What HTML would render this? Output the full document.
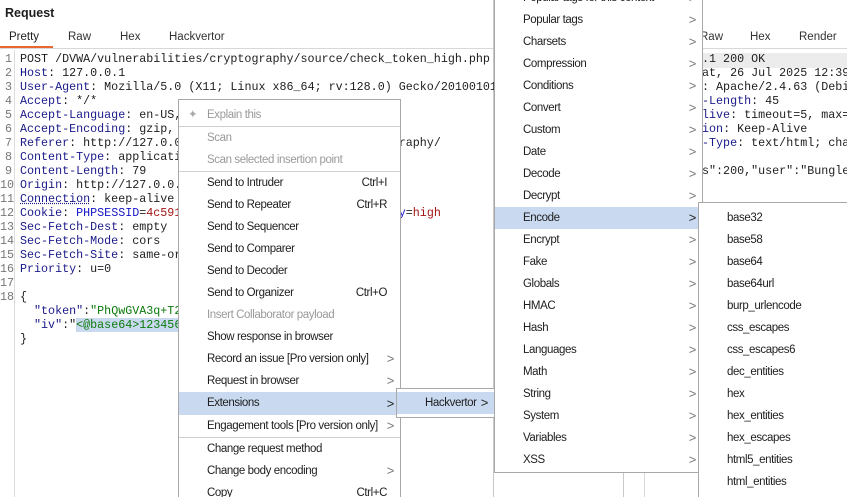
<!DOCTYPE html>
<html><head><meta charset="utf-8"><style>
*{margin:0;padding:0;box-sizing:border-box}
html,body{width:847px;height:497px;overflow:hidden}
body{background:#fff;position:relative;font-family:"Liberation Sans","DejaVu Sans",sans-serif;color:#1e1e1e}
#w{position:absolute;left:0;top:0;width:847px;height:497px;overflow:hidden}
.a{position:absolute;white-space:nowrap}
.mono{font-family:"Liberation Mono","DejaVu Sans Mono",monospace;font-size:11.7px;line-height:14px}
.k{color:#1a1a8a}.r{color:#a31515}.g{color:#0b7a0b}
.menu{position:absolute;background:#fff;border:1px solid #a8a8a8;font-size:11.5px;letter-spacing:-0.4px}
.it{position:absolute;left:0;right:0;height:22px;line-height:22px;padding-left:28px}
.it .sc{position:absolute;right:13px;top:0}
.it .ar{position:absolute;right:6px;top:0;color:#777;font-size:13px}
.dis{color:#9a9a9a}
.sel{background:#c9d9ef}
.sep{position:absolute;left:0;right:0;height:1px;background:#d0d0d0}
.ln{color:#777}
</style></head><body><div id="w">
<div class="a" style="left:5px;top:6px;font-weight:bold;font-size:12.5px">Request</div>
<div class="a" style="left:9px;top:31px;font-size:11.5px">Pretty</div>
<div class="a" style="left:68px;top:31px;font-size:11.5px;color:#333">Raw</div>
<div class="a" style="left:120px;top:31px;font-size:11.5px;color:#333">Hex</div>
<div class="a" style="left:169px;top:31px;font-size:11.5px;color:#333">Hackvertor</div>
<div class="a" style="left:0;top:46px;width:53px;height:2px;background:#e8662f"></div>
<div class="a" style="left:0;top:48px;width:493px;height:1px;background:#d8d8d8"></div>
<div class="a" style="left:493px;top:0;width:1px;height:497px;background:#c8c8c8"></div>
<div class="a" style="left:14px;top:50px;width:1px;height:447px;background:#ddd"></div>
<div class="a mono ln" style="left:0;top:52px;width:12px;text-align:right">1<br>2<br>3<br>4<br>5<br>6<br>7<br>8<br>9<br>10<br>11<br>12<br>13<br>14<br>15<br>16<br>17<br>18</div>
<div class="a mono" style="left:20px;top:52px">POST /DVWA/vulnerabilities/cryptography/source/check_token_high.php<br>
<span class="k">Host</span>: 127.0.0.1<br>
<span class="k">User-Agent</span>: Mozilla/5.0 (X11; Linux x86_64; rv:128.0) Gecko/20100101<br>
<span class="k">Accept</span>: */*<br>
<span class="k">Accept-Language</span>: en-US,<br>
<span class="k">Accept-Encoding</span>: gzip,<br>
<span class="k">Referer</span>: http://127.0.0.1/DVWA/vulnerabilities/cryptography/<br>
<span class="k">Content-Type</span>: application/json<br>
<span class="k">Content-Length</span>: 79<br>
<span class="k">Origin</span>: http://127.0.0.1<br>
<span class="k" style="text-decoration:underline dotted">Connection</span>: keep-alive<br>
<span class="k">Cookie</span>: <span style="color:#1515c8">PHPSESSID</span>=<span class="r">4c591</span>xxxxxxxxxxxxxxxxxxxxxx; <span style="color:#1515c8">security</span>=<span class="r">high</span><br>
<span class="k">Sec-Fetch-Dest</span>: empty<br>
<span class="k">Sec-Fetch-Mode</span>: cors<br>
<span class="k">Sec-Fetch-Site</span>: same-origin<br>
<span class="k">Priority</span>: u=0<br><br>
{<br>
&nbsp;&nbsp;<span class="k">"token"</span>:<span class="g">"PhQwGVA3q+T2</span><br>
&nbsp;&nbsp;<span class="k">"iv"</span>:"<span class="g" style="background:#c9d9ef">&lt;@base64&gt;123456</span><br>
}</div>
<div class="a" style="left:494px;top:205px;width:4px;height:20px;background:#c9d9ef"></div>
<div class="a" style="left:700px;top:31px;font-size:11.5px;color:#333">Raw</div>
<div class="a" style="left:750px;top:31px;font-size:11.5px;color:#333">Hex</div>
<div class="a" style="left:799px;top:31px;font-size:11.5px;color:#333">Render</div>
<div class="a" style="left:623px;top:48px;width:224px;height:1px;background:#d8d8d8"></div>
<div class="a" style="left:623px;top:53px;width:224px;height:15px;background:#ececec"></div>
<div class="a mono" style="left:695px;top:52px">1.1 200 OK<br>Sat, 26 Jul 2025 12:39<br>r: Apache/2.4.63 (Debian)<br><span class="k">t-Length</span>: 45<br><span class="k">Alive</span>: timeout=5, max=1<br><span class="k">tion</span>: Keep-Alive<br><span class="k">t-Type</span>: text/html; cha<br><br>us":200,"user":"Bungle</div>
<div class="a" style="left:623px;top:472px;width:1px;height:25px;background:#c8c8c8"></div>
<div class="a" style="left:644px;top:472px;width:1px;height:25px;background:#d8d8d8"></div>
<div class="menu" style="left:178px;top:99px;width:223px;height:410px">
<div class="it dis" style="top:4px"><span style="position:absolute;left:9px;color:#aaa">✦</span>Explain this</div>
<div class="sep" style="top:26px"></div>
<div class="it dis" style="top:27px">Scan</div>
<div class="it dis" style="top:49px">Scan selected insertion point</div>
<div class="sep" style="top:71px"></div>
<div class="it" style="top:72px">Send to Intruder<span class="sc">Ctrl+I</span></div>
<div class="it" style="top:94px">Send to Repeater<span class="sc">Ctrl+R</span></div>
<div class="it" style="top:116px">Send to Sequencer</div>
<div class="it" style="top:138px">Send to Comparer</div>
<div class="it" style="top:160px">Send to Decoder</div>
<div class="it" style="top:182px">Send to Organizer<span class="sc">Ctrl+O</span></div>
<div class="it dis" style="top:204px">Insert Collaborator payload</div>
<div class="it" style="top:226px">Show response in browser</div>
<div class="it" style="top:248px">Record an issue [Pro version only]<span class="ar">&gt;</span></div>
<div class="it" style="top:270px">Request in browser<span class="ar">&gt;</span></div>
<div class="it sel" style="top:292px;height:23px;line-height:23px">Extensions<span class="ar" style="color:#222">&gt;</span></div>
<div class="it" style="top:315px">Engagement tools [Pro version only]<span class="ar">&gt;</span></div>
<div class="sep" style="top:337px"></div>
<div class="it" style="top:338px">Change request method</div>
<div class="it" style="top:360px">Change body encoding<span class="ar">&gt;</span></div>
<div class="it" style="top:382px">Copy<span class="sc">Ctrl+C</span></div>
</div>
<div class="menu" style="left:396px;top:388px;width:99px;height:30px">
<div class="it sel" style="top:3px;padding-left:28px">Hackvertor<span class="ar" style="color:#222">&gt;</span></div>
</div>
<div class="menu" style="left:494px;top:-20px;width:209px;height:493px">
<div class="it" style="top:6px">Popular tags for this context<span class="ar">&gt;</span></div>
<div class="it" style="top:28px">Popular tags<span class="ar">&gt;</span></div>
<div class="it" style="top:50px">Charsets<span class="ar">&gt;</span></div>
<div class="it" style="top:72px">Compression<span class="ar">&gt;</span></div>
<div class="it" style="top:94px">Conditions<span class="ar">&gt;</span></div>
<div class="it" style="top:116px">Convert<span class="ar">&gt;</span></div>
<div class="it" style="top:138px">Custom<span class="ar">&gt;</span></div>
<div class="it" style="top:160px">Date<span class="ar">&gt;</span></div>
<div class="it" style="top:182px">Decode<span class="ar">&gt;</span></div>
<div class="it" style="top:204px">Decrypt<span class="ar">&gt;</span></div>
<div class="it sel" style="top:226px">Encode<span class="ar" style="color:#222">&gt;</span></div>
<div class="it" style="top:248px">Encrypt<span class="ar">&gt;</span></div>
<div class="it" style="top:270px">Fake<span class="ar">&gt;</span></div>
<div class="it" style="top:292px">Globals<span class="ar">&gt;</span></div>
<div class="it" style="top:314px">HMAC<span class="ar">&gt;</span></div>
<div class="it" style="top:336px">Hash<span class="ar">&gt;</span></div>
<div class="it" style="top:358px">Languages<span class="ar">&gt;</span></div>
<div class="it" style="top:380px">Math<span class="ar">&gt;</span></div>
<div class="it" style="top:402px">String<span class="ar">&gt;</span></div>
<div class="it" style="top:424px">System<span class="ar">&gt;</span></div>
<div class="it" style="top:446px">Variables<span class="ar">&gt;</span></div>
<div class="it" style="top:468px">XSS<span class="ar">&gt;</span></div>
</div>
<div class="menu" style="left:698px;top:202px;width:160px;height:310px;border-right:none">
<div class="it" style="top:4px">base32</div>
<div class="it" style="top:26px">base58</div>
<div class="it" style="top:48px">base64</div>
<div class="it" style="top:70px">base64url</div>
<div class="it" style="top:92px">burp_urlencode</div>
<div class="it" style="top:114px">css_escapes</div>
<div class="it" style="top:136px">css_escapes6</div>
<div class="it" style="top:158px">dec_entities</div>
<div class="it" style="top:180px">hex</div>
<div class="it" style="top:202px">hex_entities</div>
<div class="it" style="top:224px">hex_escapes</div>
<div class="it" style="top:246px">html5_entities</div>
<div class="it" style="top:268px">html_entities</div>
</div>
</div></body></html>
